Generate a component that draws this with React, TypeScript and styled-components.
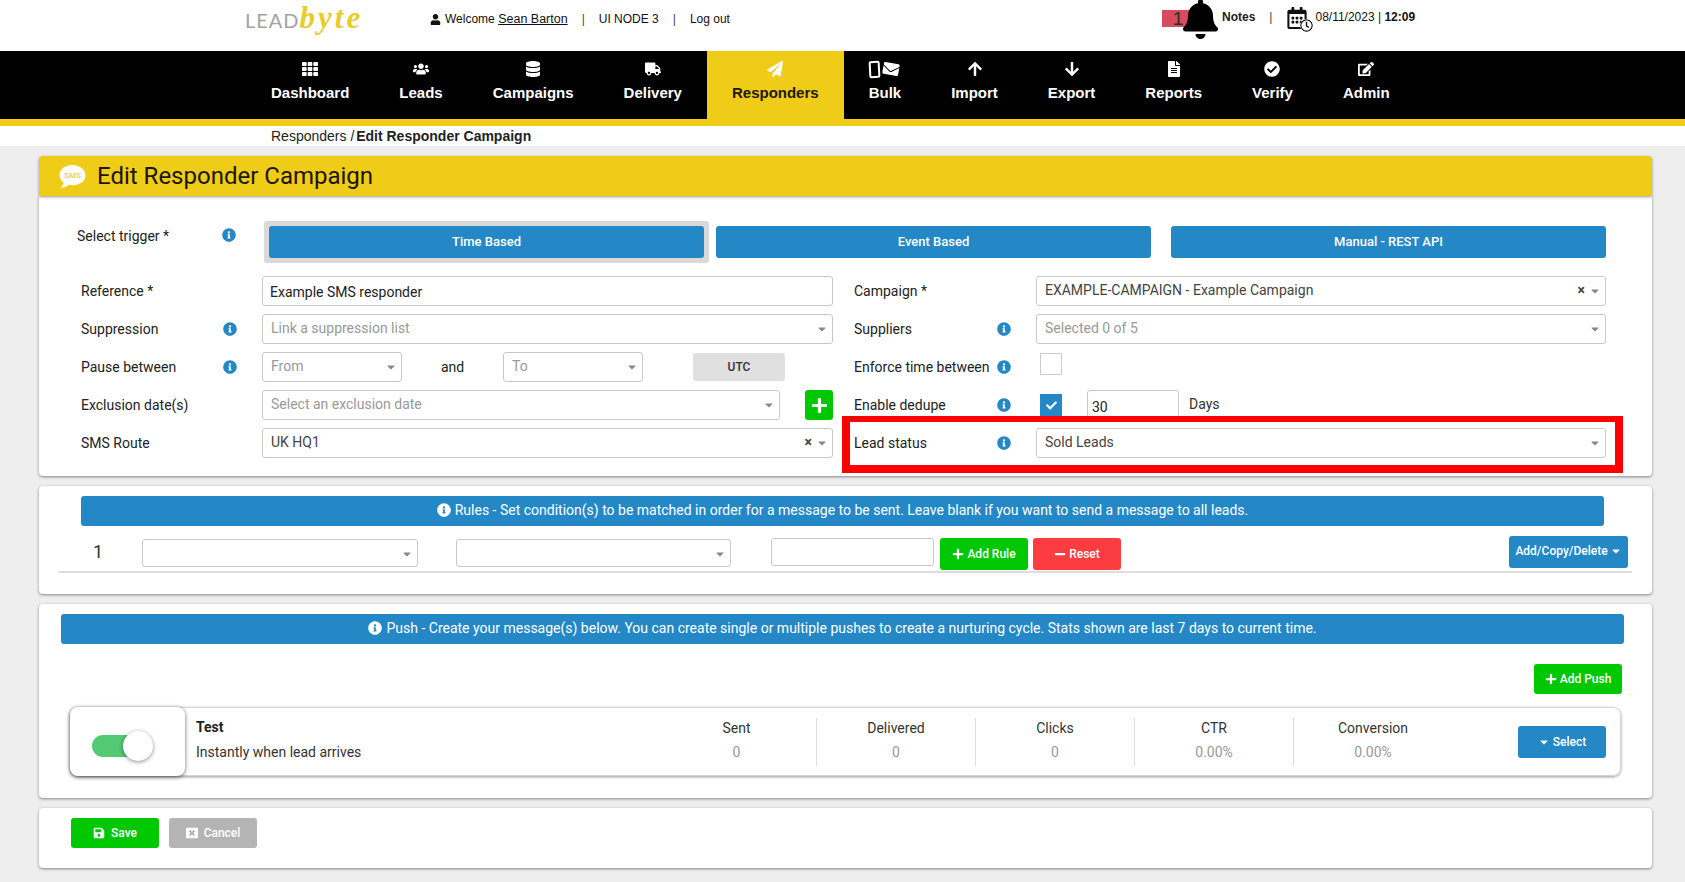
import React from "react";
import styled, { createGlobalStyle } from "styled-components";
import {
  FaTh,
  FaUsers,
  FaDatabase,
  FaTruck,
  FaPaperPlane,
  FaArrowUp,
  FaArrowDown,
  FaFileAlt,
  FaCheckCircle,
  FaEdit,
  FaUser,
  FaBell,
  FaInfoCircle,
  FaPlus,
  FaMinus,
  FaCaretDown,
  FaSave,
  FaWindowClose,
  FaCheck,
  FaEnvelope,
  FaRegCalendarAlt,
  FaRegClock,
} from "react-icons/fa";

const GlobalStyle = createGlobalStyle`
  html, body {
    margin: 0;
    padding: 0;
    background: #eeeeee;
    font-family: Roboto, "Liberation Sans", sans-serif;
    color: #222;
  }
  * { box-sizing: border-box; }
`;

const yellow = "#eecc17";
const blue = "#2488c6";
const green = "#00c800";

const Page = styled.div`
  width: 1685px;
  height: 882px;
  overflow: hidden;
  position: relative;
`;

const TopBar = styled.header`
  height: 51px;
  background: #fff;
  display: flex;
  align-items: flex-start;
  font-family: "Liberation Sans", Arial, sans-serif;
  font-size: 12px;
  color: #111;
`;

const Logo = styled.div`
  margin-left: 245px;
  width: 185px;
  height: 38px;
  display: flex;
  align-items: baseline;
`;

const LogoLead = styled.span`
  font-family: Lato, "Liberation Sans", sans-serif;
  font-size: 20px;
  font-weight: 400;
  color: #a3a3a3;
  letter-spacing: 1px;
`;

const LogoByte = styled.span`
  font-family: "Liberation Serif", serif;
  font-style: italic;
  font-weight: 700;
  font-size: 31px;
  color: #e9cb2b;
  letter-spacing: 3px;
`;

const UserLinks = styled.div`
  display: flex;
  align-items: center;
  height: 14px;
  margin-top: 12px;
  width: 732px;
  gap: 4px;
  svg { font-size: 11px; }
`;

const UserName = styled.span`
  font-size: 12.5px;
  text-decoration: underline;
`;

const Sep = styled.span`
  color: #444;
  margin: 0 ${(p: { $gap?: number }) => p.$gap ?? 10}px;
`;

const NotesArea = styled.div`
  position: relative;
  display: flex;
  align-items: flex-start;
  height: 51px;
  padding-left: 21px;
`;

const Badge = styled.span`
  position: absolute;
  left: 0;
  top: 10px;
  width: 28px;
  height: 17px;
  background: #d64b60;
  color: #2a2a2a;
  font-size: 19px;
  line-height: 18px;
  text-align: center;
  padding-left: 4px;
`;

const BellIcon = styled(FaBell)`
  position: relative;
  width: 35px;
  height: 40px;
  margin-top: -1px;
  color: #000;
`;

const NotesLabel = styled.b`
  margin: 10px 0 0 4px;
  font-size: 12px;
  color: #222;
`;

const DateArea = styled.div`
  display: flex;
  align-items: flex-start;
  margin-top: 10px;
  font-size: 12px;
`;

const CalendarIcon = styled.span`
  position: relative;
  display: block;
  width: 27px;
  height: 25px;
  margin: -3px 2px 0 0;
  svg:first-child {
    display: block;
    width: 22px;
    height: 22px;
  }
  svg:last-child {
    position: absolute;
    right: 0;
    bottom: 0;
    width: 13px;
    height: 13px;
    background: #fff;
    border-radius: 50%;
  }
`;

const Nav = styled.nav`
  height: 75px;
  background: #000;
  border-bottom: 7px solid ${yellow};
  padding-left: 246px;
  display: flex;
  font-family: "Liberation Sans", Arial, sans-serif;
`;

const NavItem = styled.a<{ $active?: boolean }>`
  display: flex;
  flex-direction: column;
  align-items: center;
  padding: 10px 25px 0;
  height: 68px;
  background: ${(p) => (p.$active ? yellow : "transparent")};
  color: ${(p) => (p.$active ? "#1a1a00" : "#fff")};
  font-weight: 700;
  font-size: 15px;
  svg {
    color: #fff;
    font-size: 16px;
    height: 16px;
    margin-bottom: 7px;
  }
`;

const BulkIcons = styled.span`
  display: flex;
  align-items: center;
  gap: 2px;
  height: 16px;
  margin-bottom: 7px;
  svg {
    margin: 0;
    width: 18px;
    transform: rotate(10deg);
  }
`;

const Phone = styled.i`
  display: block;
  width: 11px;
  height: 17px;
  border: 2px solid #fff;
  border-radius: 2px;
  transform: rotate(-3deg);
`;

const Crumbs = styled.div`
  height: 20px;
  padding-left: 271px;
  background: #fff;
  font-family: "Liberation Sans", Arial, sans-serif;
  font-size: 14px;
  line-height: 20px;
  color: #222;
  b { margin-left: -2px; }
`;

const Content = styled.main`
  padding: 10px 33px 0 39px;
  display: flex;
  flex-direction: column;
  gap: 10px;
`;

const Card = styled.section`
  background: #fff;
  border-radius: 4px;
  box-shadow: 0 1px 3px rgba(0, 0, 0, 0.45);
`;

const FormCard = styled(Card)`
  position: relative;
  margin-top: -10px;
  height: 280px;
  padding: 25px 46px 0 38px;
  border-radius: 0 0 4px 4px;
`;

const TitleBar = styled.div`
  height: 40px;
  background: ${yellow};
  border-radius: 4px 4px 0 0;
  box-shadow: 0 1px 3px rgba(0, 0, 0, 0.4);
  position: relative;
  display: flex;
  align-items: center;
  padding-left: 19px;
  z-index: 1;
`;

const Title = styled.h1`
  margin: 0 0 0 10px;
  font-size: 24px;
  font-weight: 400;
  color: #1c1500;
`;

const TriggerRow = styled.div`
  display: flex;
  align-items: flex-start;
  height: 42px;
  margin-bottom: 13px;
`;

const TriggerLabel = styled.div`
  width: 187px;
  display: flex;
  justify-content: space-between;
  padding: 7px 28px 0 0;
  font-size: 14px;
`;

const TriggerWrap = styled.div`
  width: 445px;
  height: 42px;
  padding: 5px;
  background: #d9d9d9;
  border-radius: 3px;
  margin-right: 6px;
`;

const Trigger = styled.button<{ $offset?: number }>`
  display: block;
  width: 435px;
  height: 32px;
  margin: ${(p) => (p.$offset ? `5px 0 0 ${p.$offset}px` : 0)};
  padding: 0 0 2px;
  background: ${blue};
  border: 0;
  border-radius: 3px;
  color: #fff;
  font-family: inherit;
  font-size: 13px;
  font-weight: 500;
`;

const FormGrid = styled.div`
  display: grid;
  grid-template-columns: 752px 752px;
  column-gap: 21px;
  row-gap: 8px;
  grid-auto-rows: 30px;
  margin-left: 4px;
`;

const Row = styled.div`
  display: flex;
  align-items: center;
`;

const LabelCell = styled.label<{ $width: number }>`
  width: ${(p) => p.$width}px;
  flex: none;
  display: flex;
  justify-content: space-between;
  align-items: center;
  padding-right: 25px;
  font-size: 14px;
  color: #222;
  white-space: nowrap;
`;

const Info = styled(FaInfoCircle)`
  color: ${blue};
  font-size: 14px;
  flex: none;
`;

const Field = styled.div<{ $w?: number; $h?: number }>`
  ${(p) => (p.$w ? `width: ${p.$w}px; flex: none;` : "flex: 1;")}
  height: ${(p) => p.$h ?? 30}px;
  border: 1px solid #c8c8c8;
  border-radius: 3px;
  background: #fff;
  display: flex;
  align-items: center;
  padding: 0 5px 2px 8px;
  font-size: 14px;
  color: #444;
  min-width: 0;
`;

const RuleSelect = styled(Field)<{ $left?: number }>`
  margin: 3px 0 0 ${(p) => p.$left ?? 0}px;
  padding-bottom: 0;
`;

const RuleInput = styled(Field)`
  margin: 2px 0 0 40px;
`;

const Placeholder = styled.span`
  flex: 1;
  color: #999;
`;

const Value = styled.span`
  flex: 1;
  color: #444;
`;

const InputText = styled.span`
  flex: 1;
  color: #222;
  padding-top: 4px;
  margin-left: -1px;
`;

const Clear = styled.span`
  font-size: 14px;
  font-weight: 700;
  color: #444;
  margin-right: 4px;
  line-height: 1;
`;

const Caret = styled(FaCaretDown)`
  color: #888;
  font-size: 12px;
  flex: none;
  margin: 2px -1px 0 0;
`;

const AndText = styled.span`
  width: 101px;
  text-align: center;
  font-size: 14px;
`;

const UtcTag = styled.span`
  width: 92px;
  height: 28px;
  margin-left: 50px;
  background: #e0e0e0;
  border-radius: 3px;
  display: flex;
  align-items: center;
  justify-content: center;
  font-size: 12px;
  font-weight: 500;
  color: #333;
`;

const PlusBox = styled.button`
  width: 28px;
  height: 30px;
  margin-left: 25px;
  background: ${green};
  border: 0;
  border-radius: 3px;
  color: #fff;
  font-size: 17px;
  padding: 0;
  display: flex;
  align-items: center;
  justify-content: center;
`;

const Check = styled.span<{ $on?: boolean }>`
  width: 22px;
  height: 22px;
  margin: ${(p) => (p.$on ? "0" : "-6px")} 0 0 4px;
  flex: none;
  display: flex;
  align-items: center;
  justify-content: center;
  background: ${(p) => (p.$on ? blue : "#fff")};
  border: 1px solid ${(p) => (p.$on ? blue : "#ccc")};
  color: #fff;
  font-size: 11px;
`;

const DaysField = styled(Field)`
  margin-left: 25px;
  padding: 4px 0 0 4px;
  color: #222;
`;

const DaysLabel = styled.span`
  margin: -2px 0 0 10px;
  font-size: 14px;
  color: #333;
`;

// red annotation drawn over the screenshot
const Highlight = styled.div`
  position: absolute;
  left: 803px;
  top: 220px;
  width: 781px;
  height: 57px;
  border: solid #ff0000;
  border-width: 6px 8px 8px 8px;
  pointer-events: none;
`;

const RulesCard = styled(Card)`
  height: 108px;
  padding-top: 10px;
`;

const InfoBar = styled.div`
  height: 30px;
  padding-bottom: 2px;
  background: ${blue};
  border-radius: 3px;
  color: #fff;
  font-size: 14px;
  display: flex;
  align-items: center;
  justify-content: center;
  gap: 4px;
  svg { font-size: 14px; }
`;

const RulesBar = styled(InfoBar)`
  margin: 0 48px 0 42px;
`;

const RuleRow = styled.div`
  height: 47px;
  margin: 0 20px 0 19px;
  border-bottom: 2px solid #ddd;
  display: flex;
  align-items: flex-start;
  padding-top: 10px;
`;

const RuleIndex = styled.span`
  width: 84px;
  padding-left: 35px;
  margin-top: 1px;
  font-size: 18px;
  line-height: 30px;
  color: #333;
`;

const ActionButton = styled.button<{ $bg: string }>`
  height: 32px;
  padding: 0;
  background: ${(p) => p.$bg};
  border: 0;
  border-radius: 3px;
  color: #fff;
  font-family: inherit;
  font-size: 12px;
  font-weight: 500;
  display: flex;
  align-items: center;
  justify-content: center;
  gap: 3px;
  flex: none;
  svg { font-size: 12px; }
`;

const AddRule = styled(ActionButton)`
  width: 88px;
  margin: 2px 0 0 6px;
`;

const ResetBtn = styled(ActionButton)`
  width: 88px;
  margin: 2px 0 0 5px;
`;

const CopyBtn = styled(ActionButton)`
  width: 119px;
  margin: 0 4px 0 auto;
  padding-bottom: 2px;
  gap: 2px;
`;

const PushCard = styled(Card)`
  height: 194px;
  padding-top: 10px;
`;

const PushBar = styled(InfoBar)`
  margin: 0 28px 0 22px;
`;

const PushActions = styled.div`
  display: flex;
  justify-content: flex-end;
  padding: 20px 30px 13px 0;
`;

const AddPush = styled(ActionButton)`
  width: 88px;
  height: 30px;
`;

const PushRow = styled.div`
  height: 69px;
  margin: 0 31px 0 31px;
  border: 1px solid #d5d5d5;
  border-radius: 8px;
  box-shadow: 0 1px 3px rgba(0, 0, 0, 0.4);
  display: flex;
  align-items: center;
`;

const ToggleBox = styled.div`
  width: 115px;
  height: 69px;
  margin-left: -1px;
  flex: none;
  border-radius: 8px;
  background: #fff;
  box-shadow: 0 1px 4px rgba(0, 0, 0, 0.6);
  display: flex;
  align-items: center;
  padding-left: 22px;
`;

const Track = styled.div`
  position: relative;
  width: 46px;
  height: 22px;
  margin-top: 8px;
  border-radius: 11px;
  background: #52c972;
`;

const Knob = styled.div`
  position: absolute;
  right: -15px;
  top: -4px;
  width: 30px;
  height: 30px;
  border-radius: 50%;
  background: #fff;
  box-shadow: 0 1px 4px rgba(0, 0, 0, 0.45);
`;

const PushInfo = styled.div`
  width: 472px;
  flex: none;
  padding: 0 0 3px 11px;
  font-size: 14px;
  line-height: 25px;
  color: #333;
`;

const PushName = styled.div`
  font-weight: 700;
  color: #222;
`;

const Stat = styled.div<{ $first?: boolean }>`
  width: 159px;
  height: 48px;
  flex: none;
  border-left: ${(p) => (p.$first ? 0 : "1px solid #ddd")};
  text-align: center;
  font-size: 14px;
  line-height: 24px;
  color: #333;
`;

const StatLabel = styled.div`
  margin-top: -2px;
`;

const StatValue = styled.div`
  color: #999;
`;

const SelectBtn = styled(ActionButton)`
  width: 88px;
  margin-left: 66px;
`;

const FooterCard = styled(Card)`
  height: 60px;
  padding: 10px 32px;
  display: flex;
  gap: 10px;
`;

const FootBtn = styled(ActionButton)`
  width: 88px;
  height: 30px;
  gap: 6px;
`;

const SmsBubble = () => (
  <svg width="29" height="25" viewBox="0 0 29 25">
    <path
      d="M14.5 1C7 1 1.5 5.6 1.5 11c0 3 1.6 5.6 4.2 7.4-.3 2-1.6 4-3.2 5.4 3.4 0 6.4-1.3 8.6-3 1.2.3 2.4.4 3.4.4 7.5 0 13-4.5 13-9.8S22 1 14.5 1z"
      fill="#fff"
    />
    <text x="14.5" y="14" textAnchor="middle" fontSize="8" fontWeight="700" fill="#e8d36a" fontFamily="Roboto, sans-serif">
      SMS
    </text>
  </svg>
);

const navItems: { label: string; icon: React.ReactNode; active?: boolean }[] = [
  { label: "Dashboard", icon: <FaTh /> },
  { label: "Leads", icon: <FaUsers /> },
  { label: "Campaigns", icon: <FaDatabase /> },
  { label: "Delivery", icon: <FaTruck /> },
  { label: "Responders", icon: <FaPaperPlane />, active: true },
  {
    label: "Bulk",
    icon: (
      <BulkIcons>
        <Phone />
        <FaEnvelope />
      </BulkIcons>
    ),
  },
  { label: "Import", icon: <FaArrowUp /> },
  { label: "Export", icon: <FaArrowDown /> },
  { label: "Reports", icon: <FaFileAlt /> },
  { label: "Verify", icon: <FaCheckCircle /> },
  { label: "Admin", icon: <FaEdit /> },
];

const stats = [
  { label: "Sent", value: "0" },
  { label: "Delivered", value: "0" },
  { label: "Clicks", value: "0" },
  { label: "CTR", value: "0.00%" },
  { label: "Conversion", value: "0.00%" },
];

export default function App() {
  return (
    <Page>
      <GlobalStyle />
      <TopBar>
        <Logo>
          <LogoLead>LEAD</LogoLead>
          <LogoByte>byte</LogoByte>
        </Logo>
        <UserLinks>
          <FaUser />
          <span>
            Welcome <UserName>Sean Barton</UserName>
          </span>
          <Sep>|</Sep>
          <span>UI NODE 3</span>
          <Sep>|</Sep>
          <span>Log out</span>
        </UserLinks>
        <NotesArea>
          <Badge>1</Badge>
          <BellIcon />
          <NotesLabel>Notes</NotesLabel>
        </NotesArea>
        <DateArea>
          <Sep $gap={14}>|</Sep>
          <CalendarIcon>
            <FaRegCalendarAlt />
            <FaRegClock />
          </CalendarIcon>
          <span>
            08/11/2023 | <b>12:09</b>
          </span>
        </DateArea>
      </TopBar>

      <Nav>
        {navItems.map((item) => (
          <NavItem key={item.label} $active={item.active}>
            {item.icon}
            {item.label}
          </NavItem>
        ))}
      </Nav>

      <Crumbs>
        Responders / <b>Edit Responder Campaign</b>
      </Crumbs>

      <Content>
        <TitleBar>
          <SmsBubble />
          <Title>Edit Responder Campaign</Title>
        </TitleBar>

        <FormCard>
          <TriggerRow>
            <TriggerLabel>
              Select trigger *
              <Info />
            </TriggerLabel>
            <TriggerWrap>
              <Trigger>Time Based</Trigger>
            </TriggerWrap>
            <Trigger $offset={1}>Event Based</Trigger>
            <Trigger $offset={20}>Manual - REST API</Trigger>
          </TriggerRow>

          <FormGrid>
            <Row>
              <LabelCell $width={181}>Reference *</LabelCell>
              <Field>
                <InputText>Example SMS responder</InputText>
              </Field>
            </Row>
            <Row>
              <LabelCell $width={182}>Campaign *</LabelCell>
              <Field>
                <Value>EXAMPLE-CAMPAIGN - Example Campaign</Value>
                <Clear>×</Clear>
                <Caret />
              </Field>
            </Row>

            <Row>
              <LabelCell $width={181}>
                Suppression
                <Info />
              </LabelCell>
              <Field>
                <Placeholder>Link a suppression list</Placeholder>
                <Caret />
              </Field>
            </Row>
            <Row>
              <LabelCell $width={182}>
                Suppliers
                <Info />
              </LabelCell>
              <Field>
                <Placeholder>Selected 0 of 5</Placeholder>
                <Caret />
              </Field>
            </Row>

            <Row>
              <LabelCell $width={181}>
                Pause between
                <Info />
              </LabelCell>
              <Field $w={140}>
                <Placeholder>From</Placeholder>
                <Caret />
              </Field>
              <AndText>and</AndText>
              <Field $w={140}>
                <Placeholder>To</Placeholder>
                <Caret />
              </Field>
              <UtcTag>UTC</UtcTag>
            </Row>
            <Row>
              <LabelCell $width={182}>
                Enforce time between
                <Info />
              </LabelCell>
              <Check />
            </Row>

            <Row>
              <LabelCell $width={181}>Exclusion date(s)</LabelCell>
              <Field>
                <Placeholder>Select an exclusion date</Placeholder>
                <Caret />
              </Field>
              <PlusBox>
                <FaPlus />
              </PlusBox>
            </Row>
            <Row>
              <LabelCell $width={182}>
                Enable dedupe
                <Info />
              </LabelCell>
              <Check $on>
                <FaCheck />
              </Check>
              <DaysField $w={92}>30</DaysField>
              <DaysLabel>Days</DaysLabel>
            </Row>

            <Row>
              <LabelCell $width={181}>SMS Route</LabelCell>
              <Field>
                <Value>UK HQ1</Value>
                <Clear>×</Clear>
                <Caret />
              </Field>
            </Row>
            <Row>
              <LabelCell $width={182}>
                Lead status
                <Info />
              </LabelCell>
              <Field>
                <Value>Sold Leads</Value>
                <Caret />
              </Field>
            </Row>
          </FormGrid>
          <Highlight />
        </FormCard>

        <RulesCard>
          <RulesBar>
            <FaInfoCircle />
            Rules - Set condition(s) to be matched in order for a message to be sent. Leave blank if you want to send a message to all leads.
          </RulesBar>
          <RuleRow>
            <RuleIndex>1</RuleIndex>
            <RuleSelect $w={276} $h={28}>
              <Placeholder />
              <Caret />
            </RuleSelect>
            <RuleSelect $w={275} $h={28} $left={38}>
              <Placeholder />
              <Caret />
            </RuleSelect>
            <RuleInput $w={163} $h={28} />
            <AddRule $bg={green}>
              <FaPlus />
              Add Rule
            </AddRule>
            <ResetBtn $bg="#fb3c41">
              <FaMinus />
              Reset
            </ResetBtn>
            <CopyBtn $bg={blue}>
              Add/Copy/Delete
              <FaCaretDown />
            </CopyBtn>
          </RuleRow>
        </RulesCard>

        <PushCard>
          <PushBar>
            <FaInfoCircle />
            Push - Create your message(s) below. You can create single or multiple pushes to create a nurturing cycle. Stats shown are last 7 days to current time.
          </PushBar>
          <PushActions>
            <AddPush $bg={green}>
              <FaPlus />
              Add Push
            </AddPush>
          </PushActions>
          <PushRow>
            <ToggleBox>
              <Track>
                <Knob />
              </Track>
            </ToggleBox>
            <PushInfo>
              <PushName>Test</PushName>
              Instantly when lead arrives
            </PushInfo>
            {stats.map((s, i) => (
              <Stat key={s.label} $first={i === 0}>
                <StatLabel>{s.label}</StatLabel>
                <StatValue>{s.value}</StatValue>
              </Stat>
            ))}
            <SelectBtn $bg={blue}>
              <FaCaretDown />
              Select
            </SelectBtn>
          </PushRow>
        </PushCard>

        <FooterCard>
          <FootBtn $bg={green}>
            <FaSave />
            Save
          </FootBtn>
          <FootBtn $bg="#b4b4b4">
            <FaWindowClose />
            Cancel
          </FootBtn>
        </FooterCard>
      </Content>
    </Page>
  );
}
